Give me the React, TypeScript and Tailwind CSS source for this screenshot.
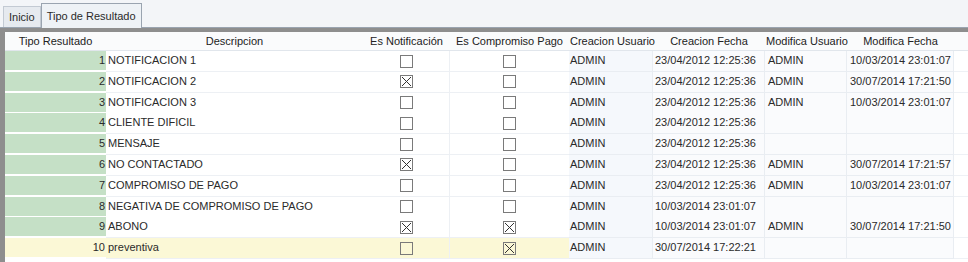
import React from 'react';

// Grid rows for "Tipo de Resultado"
interface Row {
  id: number;
  desc: string;
  notif: boolean;
  comp: boolean;
  cUser: string;
  cDate: string;
  mUser: string;
  mDate: string;
}

const rows: Row[] = [
  { id: 1, desc: 'NOTIFICACION 1', notif: false, comp: false, cUser: 'ADMIN', cDate: '23/04/2012 12:25:36', mUser: 'ADMIN', mDate: '10/03/2014 23:01:07' },
  { id: 2, desc: 'NOTIFICACION 2', notif: true, comp: false, cUser: 'ADMIN', cDate: '23/04/2012 12:25:36', mUser: 'ADMIN', mDate: '30/07/2014 17:21:50' },
  { id: 3, desc: 'NOTIFICACION 3', notif: false, comp: false, cUser: 'ADMIN', cDate: '23/04/2012 12:25:36', mUser: 'ADMIN', mDate: '10/03/2014 23:01:07' },
  { id: 4, desc: 'CLIENTE DIFICIL', notif: false, comp: false, cUser: 'ADMIN', cDate: '23/04/2012 12:25:36', mUser: '', mDate: '' },
  { id: 5, desc: 'MENSAJE', notif: false, comp: false, cUser: 'ADMIN', cDate: '23/04/2012 12:25:36', mUser: '', mDate: '' },
  { id: 6, desc: 'NO CONTACTADO', notif: true, comp: false, cUser: 'ADMIN', cDate: '23/04/2012 12:25:36', mUser: 'ADMIN', mDate: '30/07/2014 17:21:57' },
  { id: 7, desc: 'COMPROMISO DE PAGO', notif: false, comp: false, cUser: 'ADMIN', cDate: '23/04/2012 12:25:36', mUser: 'ADMIN', mDate: '10/03/2014 23:01:07' },
  { id: 8, desc: 'NEGATIVA DE COMPROMISO DE PAGO', notif: false, comp: false, cUser: 'ADMIN', cDate: '10/03/2014 23:01:07', mUser: '', mDate: '' },
  { id: 9, desc: 'ABONO', notif: true, comp: true, cUser: 'ADMIN', cDate: '10/03/2014 23:01:07', mUser: 'ADMIN', mDate: '30/07/2014 17:21:50' },
  { id: 10, desc: 'preventiva', notif: false, comp: true, cUser: 'ADMIN', cDate: '30/07/2014 17:22:21', mUser: '', mDate: '' },
];

const cols = 'grid grid-cols-[101px_257px_87px_119px_84px_112px_82px_107px_1fr]';

const Check: React.FC<{ on: boolean }> = ({ on }) => (
  <svg width="13" height="13" viewBox="0 0 13 13" className="block">
    <rect x="0.5" y="0.5" width="12" height="12" fill="none" stroke="#7a7a7a" />
    {on && <path d="M2 2 L11 11 M11 2 L2 11" stroke="#333" strokeWidth="1" />}
  </svg>
);

export default function App() {
  return (
    <div className="w-[968px] h-[262px] overflow-hidden bg-white text-[11px] text-[#2a2a2a]" style={{ fontFamily: 'Tahoma, "Liberation Sans", Arial, sans-serif' }}>
      {/* Tabs */}
      <div className="flex items-end h-[28px] bg-[#f3f5f8] border-b border-[#9aa4b0] pl-[3px]">
        <div className="h-[21px] px-[5px] flex items-center bg-[#e6eaef] border border-b-0 border-[#c3cad3]">Inicio</div>
        <div className="h-[25px] px-[5px] flex items-center bg-[#eef2f6] border border-b-0 border-[#9aa4b0] -mb-px">Tipo de Resultado</div>
      </div>

      {/* Grid frame */}
      <div className="border-t-[4px] border-l-[5px] border-[#8e8e8e] h-full">
        <div className={`${cols} h-[19px] items-center bg-[#fafbfc] border-b border-[#e1e6ec] text-[#222]`}>
          <div className="text-center">Tipo Resultado</div>
          <div className="text-center">Descripcion</div>
          <div className="text-center">Es Notificación</div>
          <div className="text-center">Es Compromiso Pago</div>
          <div className="pl-[1px] whitespace-nowrap">Creacion Usuario</div>
          <div className="text-center">Creacion Fecha</div>
          <div className="pl-[1px] whitespace-nowrap">Modifica Usuario</div>
          <div className="text-center">Modifica Fecha</div>
          <div />
        </div>
        {rows.map((r) => {
          const sel = r.id === 10;
          const left = sel ? 'bg-[#fbf8d6]' : 'bg-white';
          return (
            <div key={r.id} className={`${cols} h-[20.8px]`}>
              <div className={`${sel ? 'bg-[#fbf8d6]' : 'bg-[#c5e0c6]'} border-b-2 border-white text-right pr-[1px] leading-[19px]`}>{r.id}</div>
              <div className={`${left} border-b border-[#edf0f4] pl-[2px] leading-[19px] whitespace-nowrap`}>{r.desc}</div>
              <div className={`${left} border-b border-r border-[#edf0f4] flex items-center justify-center`}><Check on={r.notif} /></div>
              <div className={`${left} border-b border-[#edf0f4] flex items-center justify-center`}><Check on={r.comp} /></div>
              <div className="bg-[#f5f8fc] border-b border-r border-[#e9edf2] pl-[1px] leading-[19px]">{r.cUser}</div>
              <div className="bg-[#fafbfd] border-b border-r border-[#e9edf2] pl-[2px] leading-[19px] whitespace-nowrap">{r.cDate}</div>
              <div className="bg-[#fafbfd] border-b border-r border-[#e9edf2] pl-[3px] leading-[19px]">{r.mUser}</div>
              <div className="bg-[#fafbfd] border-b border-r border-[#e9edf2] pl-[3px] leading-[19px] whitespace-nowrap">{r.mDate}</div>
              <div className="bg-white border-b border-[#eef1f5]" />
            </div>
          );
        })}
      </div>
    </div>
  );
}
